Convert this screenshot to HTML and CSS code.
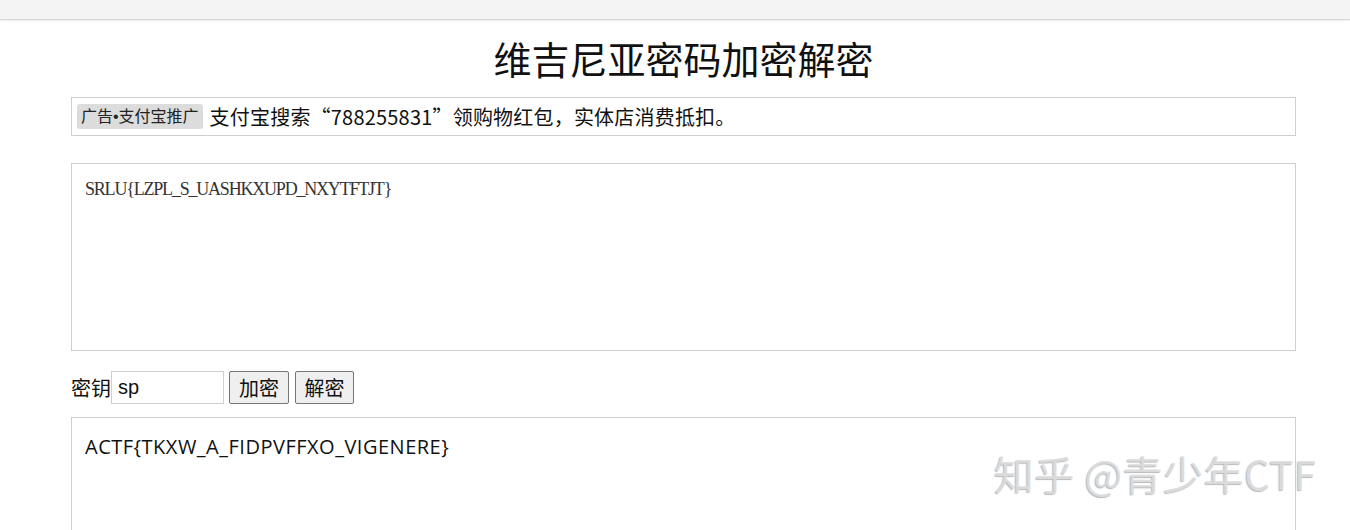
FILE: index.html
```html
<!DOCTYPE html>
<html lang="zh-CN">
<head>
<meta charset="utf-8">
<title>维吉尼亚密码加密解密</title>
<link rel="stylesheet" href="styles.css">
</head>
<body>
<div class="topbar"></div>
<main class="page">
  <h1 class="title">维吉尼亚密码加密解密</h1>
  <div class="ad">
    <span class="ad-badge">广告•支付宝推广</span>
    <span class="ad-text">支付宝搜索“788255831”领购物红包，实体店消费抵扣。</span>
  </div>
  <textarea class="box box-in" readonly>SRLU{LZPL_S_UASHKXUPD_NXYTFTJT}</textarea>
  <div class="controls">
    <label class="key-label" for="key">密钥</label>
    <input class="key-input" id="key" type="text" value="sp">
    <button class="btn" type="button">加密</button>
    <button class="btn" type="button">解密</button>
  </div>
  <textarea class="box box-out" readonly>ACTF{TKXW_A_FIDPVFFXO_VIGENERE}</textarea>
</main>
<div class="watermark">知乎 @青少年CTF</div>
</body>
</html>
```

FILE: styles.css
```css
html, body {
  margin: 0;
  padding: 0;
  background: #fff;
}
body {
  font-family: "Noto Sans", "Noto Sans CJK SC", sans-serif;
  color: #111;
  overflow: hidden;
  height: 530px;
  position: relative;
}
.topbar {
  height: 19px;
  background: #f4f4f4;
  border-bottom: 1px solid #d6d6d6;
  box-shadow: 0 1px 2px rgba(0,0,0,0.08);
}
.page {
  width: 1225px;
  margin: 0 0 0 71px;
  display: flex;
  flex-direction: column;
}
.title {
  margin: 14px 0 15px;
  font-size: 38px;
  line-height: 48px;
  font-weight: 400;
  text-align: center;
  color: #111;
  font-family: "Noto Sans CJK SC", sans-serif;
}
.ad {
  height: 37px;
  border: 1px solid #cfcfcf;
  display: flex;
  align-items: center;
  padding: 0 5px;
  gap: 7px;
}
.ad-badge {
  background: #dcdcdc;
  border-radius: 3px;
  font-size: 16px;
  line-height: 25px;
  height: 25px;
  padding: 0 4px;
  color: #222;
  font-family: "Liberation Sans", "Noto Sans CJK SC", sans-serif;
}
.ad-text {
  font-size: 20px;
  line-height: 26px;
  letter-spacing: 0.2px;
  color: #111;
  font-family: "Noto Sans CJK SC", sans-serif;
}
.box {
  box-sizing: border-box;
  width: 1225px;
  height: 188px;
  border: 1px solid #cfcfcf;
  resize: none;
  outline: none;
  margin: 0;
  background: #fff;
  color: #222;
}
.box-in {
  margin-top: 27px;
  padding: 12px 13px;
  font-family: "Liberation Serif", "Noto Sans CJK SC", serif;
  font-size: 18px;
  line-height: 26px;
  letter-spacing: -1.2px;
  color: #333;
}
.controls {
  display: flex;
  align-items: center;
  margin: 20px 0 13px;
  height: 33px;
}
.key-label {
  font-size: 20px;
  font-family: "Noto Sans CJK SC", sans-serif;
  color: #111;
}
.key-input {
  box-sizing: border-box;
  width: 113px;
  height: 33px;
  border: 1px solid #cfcfcf;
  padding: 0 6px;
  font-family: "Liberation Sans", sans-serif;
  font-size: 20px;
  color: #111;
  outline: none;
  margin: 0 5px 0 0;
}
.btn {
  box-sizing: border-box;
  width: 60px;
  height: 33px;
  padding: 0;
  margin: 0 6px 0 0;
  border: 1px solid #767676;
  border-radius: 2px;
  background: #efefef;
  font-family: "Noto Sans CJK SC", sans-serif;
  font-size: 20px;
  color: #111;
}
.btn + .btn {
  width: 59px;
}
.box-out {
  padding: 14px 13px;
  font-family: "Open Sans", "Noto Sans CJK SC", sans-serif;
  font-size: 20px;
  line-height: 30px;
  letter-spacing: 0.5px;
  color: #111;
}
.watermark {
  position: absolute;
  left: 994px;
  top: 448px;
  font-family: "Noto Sans CJK SC", sans-serif;
  font-size: 40px;
  line-height: 50px;
  letter-spacing: 0.5px;
  color: rgba(222,222,222,0.9);
  text-shadow: -1px 1px 1px rgba(100,100,100,0.45);
  white-space: nowrap;
}
```
